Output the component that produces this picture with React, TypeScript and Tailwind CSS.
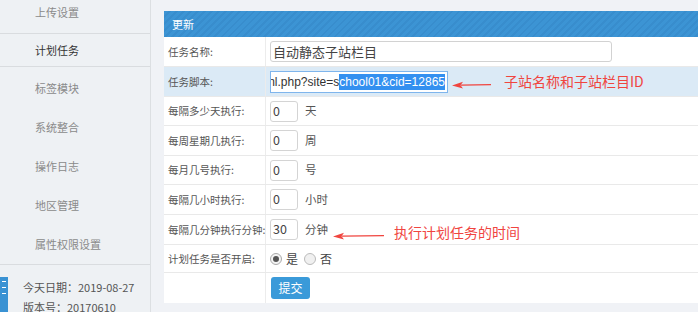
const font = "font-['Microsoft_YaHei','Noto_Sans_CJK_SC',sans-serif]";

const menu = ['标签模块', '系统整合', '操作日志', '地区管理', '属性权限设置'];

function Arrow({ width }: { width: number }) {
  return (
    <svg width={width} height="10" viewBox={`0 0 ${width} 10`}>
      <path d={`M${width} 4.6 L9 5.2`} stroke="#f0453f" strokeWidth="1.3" fill="none" />
      <path d="M0 5.4 L11 1.8 L8.5 5.3 L11 8.6 Z" fill="#f0453f" />
    </svg>
  );
}

function SmallInput({ value, unit }: { value: string; unit: string }) {
  return (
    <div className="flex items-center gap-[7px]">
      <div className="w-[28px] h-[21px] border border-[#d4d4d4] rounded-[3px] bg-white flex items-center pl-[2px] text-[12.5px] text-[#444]">
        {value}
      </div>
      <span className="text-[11.5px] text-[#555]">{unit}</span>
    </div>
  );
}

function Row({ label, children, className = 'h-[30px]', tint = false }: { label: string; children?: React.ReactNode; className?: string; tint?: boolean }) {
  return (
    <div className={`flex border-b border-[#e9e9e9] ${className} ${tint ? 'bg-[#dbeaf6]' : 'bg-white'}`}>
      <div className="w-[102px] border-r border-[#ececec] flex items-center pl-[4px] text-[10.5px] text-[#555] whitespace-nowrap">{label}</div>
      <div className="flex-1 flex items-center pl-[4px]">{children}</div>
    </div>
  );
}

export default function App() {
  return (
    <div className={`w-[698px] h-[312px] overflow-hidden flex bg-[#f0f2f6] ${font}`}>
      {/* sidebar */}
      <div className="w-[151px] shrink-0 bg-[#eef1f4] border-r border-[#dcdfe2] flex flex-col">
        <div className="h-[34px] shrink-0 border-b border-[#d9dcdf] flex items-end pb-[13px] pl-[35px] text-[11px] text-[#8a8a8a]">上传设置</div>
        <div className="h-[33px] shrink-0 border-b border-[#d9dcdf] flex items-center pl-[35px] text-[11px] text-[#333]">计划任务</div>
        <div className="pt-[2px] border-b border-[#d9dcdf] shrink-0">
          {menu.map((m) => (
            <div key={m} className="h-[39px] flex items-center pl-[35px] text-[11px] text-[#8a8a8a]">{m}</div>
          ))}
        </div>
        <div className="flex mt-[12px] shrink-0">
          <div className="w-[8px] h-[40px] bg-[#3a92d3] flex flex-col items-center pt-[4px] gap-[5px]">
            <span className="w-[4px] h-[1px] bg-white" />
            <span className="w-[4px] h-[1px] bg-white" />
            <span className="w-[4px] h-[1px] bg-white" />
          </div>
          <div className="pl-[15px] text-[11px] text-[#555] leading-[20px]">
            <div>今天日期：2019-08-27</div>
            <div>版本号：20170610</div>
          </div>
        </div>
      </div>

      {/* main */}
      <div className="flex-1 pt-[11px] pl-[13px]">
        <div className="relative w-[560px] bg-white">
          <div className="h-[26px] flex items-center pl-[8px] text-[11px] text-white bg-[repeating-linear-gradient(135deg,#3c94d4_0px,#3c94d4_3px,#388dcd_3px,#388dcd_5px)]">
            更新
          </div>
          <Row label="任务名称:">
            <div className="w-[342px] h-[21px] border border-[#d2d2d2] rounded-[3px] flex items-center pl-[2px] text-[13px] text-[#444]">
              自动静态子站栏目
            </div>
          </Row>
          <Row label="任务脚本:" tint>
            <div className="w-[178px] h-[22px] border border-[#7fb5ec] bg-white flex items-center justify-end overflow-hidden pr-[2px] text-[12px] whitespace-nowrap font-['Liberation_Sans',Arial,sans-serif]">
              <span className="text-[#333]">nl.php?site=s</span>
              <span className="bg-[#3390f0] text-white leading-[16px]">chool01&amp;cid=12865</span>
            </div>
          </Row>
          <Row label="每隔多少天执行:" className="h-[29px]"><SmallInput value="0" unit="天" /></Row>
          <Row label="每周星期几执行:"><SmallInput value="0" unit="周" /></Row>
          <Row label="每月几号执行:" className="h-[29px]"><SmallInput value="0" unit="号" /></Row>
          <Row label="每隔几小时执行:"><SmallInput value="0" unit="小时" /></Row>
          <Row label="每隔几分钟执行分钟:"><SmallInput value="30" unit="分钟" /></Row>
          <Row label="计划任务是否开启:" className="h-[28px]">
            <div className="flex items-center text-[12px] text-[#444]">
              <span className="w-[12px] h-[12px] rounded-full border border-[#aaa] bg-[#f4f4f4] flex items-center justify-center">
                <span className="w-[6px] h-[6px] rounded-full bg-[#555]" />
              </span>
              <span className="ml-[4px]">是</span>
              <span className="ml-[6px] w-[12px] h-[12px] rounded-full border border-[#bbb] bg-[#f0f0f0]" />
              <span className="ml-[4px]">否</span>
            </div>
          </Row>
          <Row label="" className="h-[30px] border-b-0">
            <div className="w-[39px] h-[22px] rounded-[3px] bg-[#3a9ad9] text-white text-[12px] flex items-center justify-center ml-[1px]">提交</div>
          </Row>

          {/* annotations */}
          <div className="absolute left-[288px] top-[67px] flex items-center gap-[13px]">
            <Arrow width={39} />
            <span className="text-[14px] text-[#f0453f] -mt-[7px]">子站名称和子站栏目ID</span>
          </div>
          <div className="absolute left-[169px] top-[218px] flex items-center gap-[10px]">
            <Arrow width={51} />
            <span className="text-[14px] text-[#f0453f] -mt-[7px]">执行计划任务的时间</span>
          </div>
        </div>
      </div>
    </div>
  );
}
